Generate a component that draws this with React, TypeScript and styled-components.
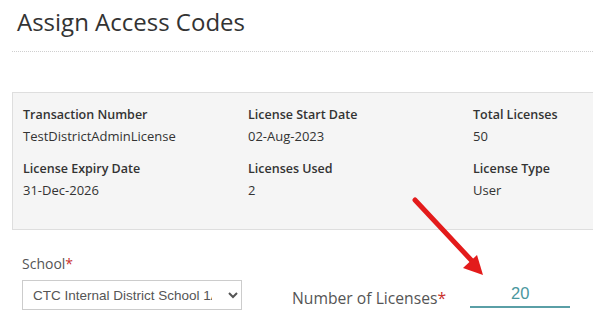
import { createGlobalStyle, styled } from "styled-components";

const GlobalStyle = createGlobalStyle`
  html, body {
    margin: 0;
    padding: 0;
    background: #fff;
    overflow: hidden;
  }
  body {
    font-family: "Open Sans", "Liberation Sans", sans-serif;
    color: #333;
  }
`;

const details = [
  { label: "Transaction Number", value: "TestDistrictAdminLicense" },
  { label: "License Start Date", value: "02-Aug-2023" },
  { label: "Total Licenses", value: "50" },
  { label: "License Expiry Date", value: "31-Dec-2026" },
  { label: "Licenses Used", value: "2" },
  { label: "License Type", value: "User" },
];

const App = () => {
  return (
    <Page>
      <GlobalStyle />
      <Header>
        <Title>Assign Access Codes</Title>
      </Header>

      <InfoPanel>
        {details.map((d) => (
          <InfoItem key={d.label}>
            <InfoLabel>{d.label}</InfoLabel>
            <InfoValue>{d.value}</InfoValue>
          </InfoItem>
        ))}
      </InfoPanel>

      <FormRow>
        <Field>
          <FieldLabel>
            School<Required>*</Required>
          </FieldLabel>
          <SchoolSelect defaultValue="ctc1">
            <option value="ctc1">CTC Internal District School 1A</option>
          </SchoolSelect>
        </Field>
        <InlineField>
          <InlineLabel>
            Number of Licenses<Required>*</Required>
          </InlineLabel>
          <CountInput type="text" defaultValue="20" />
        </InlineField>
        <Arrow width="80" height="90" viewBox="0 0 80 90">
          <line x1="3" y1="3" x2="60" y2="64" stroke="#e31b1b" strokeWidth="5" strokeLinecap="round" />
          <polygon points="71,78 51,71 65,58" fill="#e31b1b" />
        </Arrow>
      </FormRow>
    </Page>
  );
};

const Page = styled.div`
  padding: 0 0 0 12px;
  width: 581px;
`;

const Header = styled.div`
  height: 51px;
  border-bottom: 1px dotted #cfcfcf;
`;

const Title = styled.h1`
  margin: 0;
  padding: 6px 0 0 5px;
  font-size: 24px;
  font-weight: 400;
  line-height: 32px;
  color: #333;
`;

const InfoPanel = styled.div`
  margin-top: 40px;
  width: 720px;
  box-sizing: border-box;
  padding: 11px 0 29px 10px;
  background: #f5f5f5;
  border: 1px solid #dedede;
  display: grid;
  grid-template-columns: repeat(3, 225px);
  row-gap: 12px;
`;

const InfoItem = styled.div`
  display: flex;
  flex-direction: column;
`;

const InfoLabel = styled.div`
  font-size: 12.5px;
  font-weight: 600;
  line-height: 22px;
  color: #333;
`;

const InfoValue = styled.div`
  font-size: 13px;
  line-height: 20px;
  color: #333;
`;

const FormRow = styled.div`
  position: relative;
  display: flex;
  align-items: flex-end;
  margin-top: 24px;
  padding-left: 10px;
`;

const Field = styled.div`
  display: flex;
  flex-direction: column;
  width: 270px;
`;

const InlineField = styled.div`
  display: flex;
  align-items: center;
  gap: 24px;
  margin-bottom: 2px;
`;

const FieldLabel = styled.label`
  font-size: 14px;
  line-height: 20px;
  color: #555;
  margin-bottom: 6px;
`;

const InlineLabel = styled.label`
  font-size: 15.7px;
  line-height: 20px;
  color: #555;
  margin-top: 8px;
`;

const Required = styled.span`
  color: #c9302c;
`;

const SchoolSelect = styled.select`
  width: 220px;
  height: 30px;
  box-sizing: border-box;
  padding: 0 13px 0 6px;
  border: 1px solid #ccc;
  border-radius: 0;
  background: #fff;
  font-family: "Liberation Sans", Arial, sans-serif;
  font-size: 13.5px;
  color: #555;
`;

const CountInput = styled.input`
  width: 100px;
  height: 28px;
  box-sizing: border-box;
  border: none;
  border-bottom: 2px solid #5a9fa6;
  outline: none;
  text-align: center;
  font-family: "Liberation Sans", Arial, sans-serif;
  font-size: 16.5px;
  color: #4a979e;
  background: transparent;
  padding: 0;
`;

const Arrow = styled.svg`
  position: absolute;
  left: 400px;
  top: -57px;
`;

export default App;
